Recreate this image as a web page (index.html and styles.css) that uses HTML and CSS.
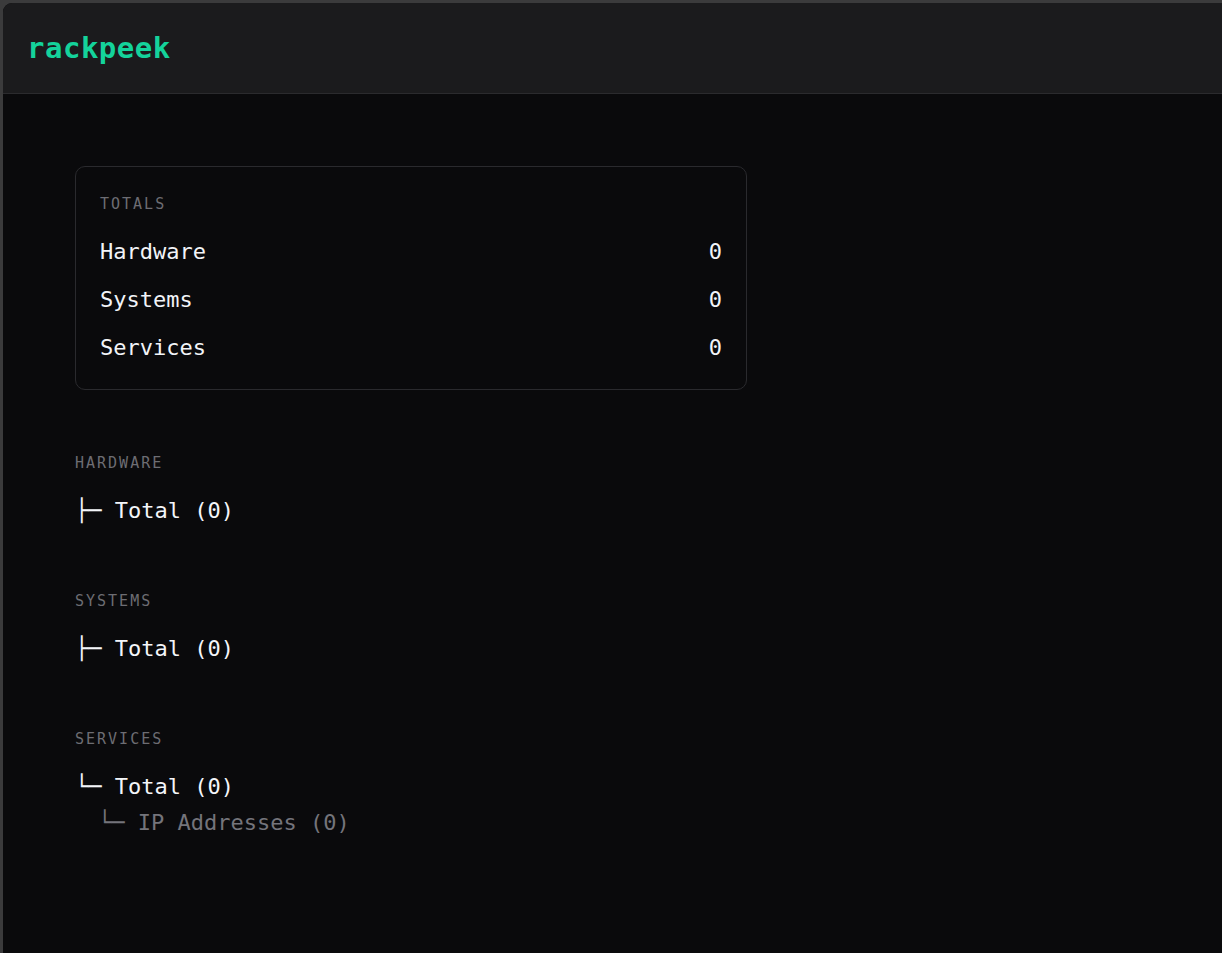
FILE: index.html
```html
<!DOCTYPE html>
<html lang="en">
<head>
<meta charset="utf-8">
<title>rackpeek</title>
<link rel="stylesheet" href="styles.css">
</head>
<body>
<div class="window">
  <header class="topbar">
    <div class="brand">rackpeek</div>
  </header>
  <main class="content">
    <section class="card">
      <div class="label">TOTALS</div>
      <div class="rows">
        <div class="row"><span>Hardware</span><span>0</span></div>
        <div class="row"><span>Systems</span><span>0</span></div>
        <div class="row"><span>Services</span><span>0</span></div>
      </div>
    </section>

    <section class="group">
      <div class="label">HARDWARE</div>
      <div class="tree">
        <div class="node">├─ Total (0)</div>
      </div>
    </section>

    <section class="group">
      <div class="label">SYSTEMS</div>
      <div class="tree">
        <div class="node">├─ Total (0)</div>
      </div>
    </section>

    <section class="group">
      <div class="label">SERVICES</div>
      <div class="tree">
        <div class="node">└─ Total (0)</div>
        <div class="node sub">└─ IP Addresses (0)</div>
      </div>
    </section>
  </main>
</div>
</body>
</html>
```

FILE: styles.css
```css
html, body {
  margin: 0;
  padding: 0;
  height: 100%;
}

body {
  background: #3b3b3c;
  overflow: hidden;
  font-family: "DejaVu Sans Mono", "Liberation Mono", monospace;
}

.window {
  margin: 3px 0 0 3px;
  min-height: 950px;
  background: #0a0a0c;
  border-top-left-radius: 9px;
  overflow: hidden;
}

.topbar {
  height: 91px;
  background: #1b1b1d;
  border-bottom: 1px solid #2b2b2e;
  box-sizing: border-box;
  display: flex;
  align-items: center;
  padding-left: 24px;
}

.brand {
  color: #14d39b;
  font-weight: bold;
  font-size: 29px;
  letter-spacing: 0.5px;
  line-height: 1;
  padding-top: 1px;
}

.content {
  padding: 72px;
  display: flex;
  flex-direction: column;
  align-items: flex-start;
}

.card {
  width: 672px;
  box-sizing: border-box;
  border: 1px solid #2a2a2e;
  border-radius: 10px;
  padding: 25px 24px 23px;
  display: flex;
  flex-direction: column;
}

.label {
  color: #6d6d73;
  font-size: 15px;
  letter-spacing: 2px;
  line-height: 24px;
}

.card .label {
  margin-bottom: 18px;
}

.rows {
  display: flex;
  flex-direction: column;
  gap: 12px;
}

.row {
  display: flex;
  justify-content: space-between;
  color: #f2f4f8;
  font-size: 22px;
  line-height: 36px;
}

.group {
  margin-top: 60px;
  display: flex;
  flex-direction: column;
  gap: 18px;
}

.card + .group {
  margin-top: 61px;
}

.tree {
  display: flex;
  flex-direction: column;
}

.node {
  color: #f4f6fa;
  font-size: 22px;
  line-height: 36px;
  white-space: pre;
}

.node.sub {
  color: #74747b;
  padding-left: 23px;
}
```
